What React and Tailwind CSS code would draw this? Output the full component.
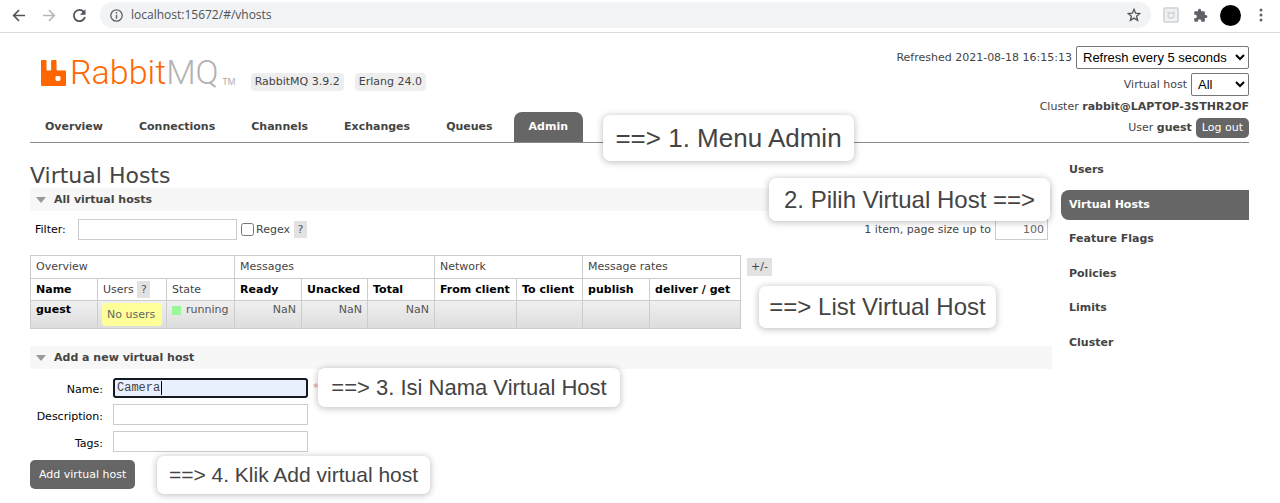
import React from "react";

const tabs = ["Overview", "Connections", "Channels", "Exchanges", "Queues", "Admin"];
const sideItems = ["Users", "Virtual Hosts", "Feature Flags", "Policies", "Limits", "Cluster"];

function BrowserBar() {
  return (
    <div className="flex h-[33px] items-center border-b border-[#dadce0] bg-white pr-[17px] pb-[2px] pl-2">
      <button type="button" aria-label="Back" className="flex w-[22px] justify-center">
        <svg width="14" height="13" viewBox="0 0 15 14" fill="none" stroke="#50545a" strokeWidth="1.7">
          <path d="M14 7H2M7.5 1.2L1.7 7l5.8 5.8" />
        </svg>
      </button>
      <button type="button" aria-label="Forward" className="ml-2 flex w-[22px] justify-center">
        <svg width="14" height="13" viewBox="0 0 15 14" fill="none" stroke="#b4b6b9" strokeWidth="1.6">
          <path d="M1 7h12M7.5 1.2L13.3 7l-5.8 5.8" />
        </svg>
      </button>
      <button type="button" aria-label="Reload" className="ml-2 flex w-[22px] justify-center">
        <svg width="15" height="15" viewBox="0 0 16 16" fill="none">
          <path d="M12.6 4.2A6 6 0 1 0 13.8 9.6" stroke="#50545a" strokeWidth="1.9" />
          <path d="M14.4 1.2v6H8.4z" fill="#50545a" />
        </svg>
      </button>
      <div className="ml-[10px] flex h-[26px] flex-1 items-center rounded-full bg-[#f1f3f4] pr-[10px] pl-[10px]">
        <svg width="13" height="13" viewBox="0 0 13 13" fill="none" stroke="#5f6368" className="shrink-0">
          <circle cx="6.5" cy="6.5" r="5.7" strokeWidth="1.3" />
          <path d="M6.5 5.7v4M6.5 3.1v1.4" strokeWidth="1.4" />
        </svg>
        <input
          aria-label="Address"
          readOnly
          value="localhost:15672/#/vhosts"
          className="ml-2 min-w-0 flex-1 bg-transparent font-['Open_Sans',sans-serif] text-[12px] text-[#4d5156] outline-none"
        />
        <button type="button" aria-label="Bookmark">
          <svg width="14" height="14" viewBox="0 0 14 14" fill="none" stroke="#50545a" strokeWidth="1.3">
            <path d="M7 1.3l1.6 3.9 4.2.3-3.2 2.7 1 4.1L7 10.1l-3.6 2.2 1-4.1L1.2 5.5l4.2-.3z" />
          </svg>
        </button>
      </div>
      <div className="flex items-center">
        <button type="button" aria-label="Password extension" className="ml-[12px]">
          <svg width="16" height="16" viewBox="0 0 17 17" fill="none">
            <rect x="1" y="1" width="15" height="15" rx="1" fill="#eff1f2" stroke="#ced2d5" strokeWidth="1.6" />
            <path d="M5.500 5.500v5l1.200 1h3.600l1.200-1v-5l-1.500 1h-3z" stroke="#ced2d5" strokeWidth="1.3" />
          </svg>
        </button>
        <button type="button" aria-label="Extensions" className="ml-[14px]">
          <svg width="15" height="15" viewBox="0 0 24 24" fill="#5f6368">
            <path d="M20.500 11H19V7c0-1.100-.9-2-2-2h-4V3.500a2.500 2.500 0 0 0-5 0V5H4c-1.100 0-2 .9-2 2v3.800h1.500a2.700 2.700 0 0 1 0 5.400H2V20c0 1.100.9 2 2 2h3.800v-1.500a2.700 2.700 0 0 1 5.400 0V22H17c1.100 0 2-.9 2-2v-4h1.500a2.500 2.500 0 0 0 0-5z" />
          </svg>
        </button>
        <button type="button" aria-label="Profile" className="ml-[12px] h-[21px] w-[21px] rounded-full bg-black" />
        <button type="button" aria-label="Browser menu" className="ml-[18px]">
          <svg width="4" height="14" viewBox="0 0 4 14" fill="#5f6368">
            <circle cx="2" cy="2" r="1.500" />
            <circle cx="2" cy="7" r="1.500" />
            <circle cx="2" cy="12" r="1.500" />
          </svg>
        </button>
      </div>
    </div>
  );
}

function Logo() {
  return (
    <a href="#/" aria-label="RabbitMQ" className="flex items-end">
      <svg width="25" height="26" viewBox="0 0 25 26" fill="#ff6600" className="mb-[5px]">
        <path
          fillRule="evenodd"
          d="M1 0h3.500q1 0 1 1v8.500q0 1 1 1h2.600q1 0 1-1V1q0-1 1-1h3.400q1 0 1 1v8.500q0 1 1 1H24q1 0 1 1V25q0 1-1 1H1q-1 0-1-1V1q0-1 1-1zM15.900 16q-1.400 0-1.400 1.400v2.200q0 1.400 1.400 1.400h2.200q1.400 0 1.400-1.400v-2.200q0-1.400-1.400-1.400z"
        />
      </svg>
      <span className="ml-1 font-['Roboto',sans-serif] text-[34px] leading-[38px] font-light text-[#f60]">
        Rabbit<span className="text-[#b3b3b3]">MQ</span>
      </span>
      <span className="mb-1 ml-1 font-['Open_Sans',sans-serif] text-[9px] leading-[10px] text-[#aaa]">TM</span>
    </a>
  );
}

function Header() {
  return (
    <header className="flex h-[110px] justify-between border-b border-[#888]">
      <div className="flex flex-col justify-between">
        <div className="flex items-end gap-[11px] pt-[20px] pl-[11px]">
          <Logo />
          <span className="ml-1 rounded-[4px] bg-[#eee] px-1 leading-[18px]">RabbitMQ 3.9.2</span>
          <span className="rounded-[4px] bg-[#eee] px-1 leading-[18px]">Erlang 24.0</span>
        </div>
        <nav className="flex gap-[6px] font-bold">
          {tabs.map((t) => (
            <a
              key={t}
              href={"#/" + t.toLowerCase()}
              className={
                t === "Admin"
                  ? "rounded-t-[8px] bg-[#666] px-[15px] leading-[30px] text-white"
                  : "px-[15px] leading-[30px]"
              }
            >
              {t}
            </a>
          ))}
        </nav>
      </div>
      <div className="flex flex-col items-end pt-[13px]">
        <div className="flex items-center gap-1">
          <label htmlFor="refresh">Refreshed 2021-08-18 16:15:13</label>
          <select
            id="refresh"
            className="h-[23px] w-[173px] rounded-[2px] border border-[#767676] bg-white pl-[2px] font-['Liberation_Sans',sans-serif] text-[13px] text-black"
          >
            <option>Refresh every 5 seconds</option>
          </select>
        </div>
        <div className="mt-1 flex items-center gap-1">
          <label htmlFor="vhost">Virtual host</label>
          <select
            id="vhost"
            className="h-[23px] w-[58px] rounded-[2px] border border-[#767676] bg-white pl-[2px] font-['Liberation_Sans',sans-serif] text-[13px] text-black"
          >
            <option>All</option>
          </select>
        </div>
        <div className="leading-[22px]">
          Cluster <b>rabbit@LAPTOP-3STHR2OF</b>
        </div>
        <div className="flex items-center gap-1">
          <span>
            User <b>guest</b>
          </span>
          <button type="button" className="h-[20px] rounded-[5px] bg-[#666] px-[6px] text-white">
            Log out
          </button>
        </div>
      </div>
    </header>
  );
}

function SectionTitle({ children }) {
  return (
    <h2 className="flex h-[23px] items-center bg-[#f7f7f7] pl-[6px] font-bold">
      <svg width="10" height="6" viewBox="0 0 10 6" fill="#999" className="mr-2">
        <path d="M0 0h10L5 6z" />
      </svg>
      {children}
    </h2>
  );
}

function HelpMark() {
  return (
    <button type="button" aria-label="Help" className="h-[17px] w-[13px] bg-[#e2e2e2] text-[#555]">
      ?
    </button>
  );
}

function HostsTable() {
  const cell = "border border-[#ccc] px-[5px] ";
  const sortable = cell + "text-left font-bold text-black";
  return (
    <table className="w-[710px] table-fixed border-collapse">
      <colgroup>
        <col className="w-[67px]" />
        <col className="w-[69px]" />
        <col className="w-[68px]" />
        <col className="w-[67px]" />
        <col className="w-[66px]" />
        <col className="w-[67px]" />
        <col className="w-[82px]" />
        <col className="w-[66px]" />
        <col className="w-[67px]" />
        <col className="w-[91px]" />
      </colgroup>
      <thead>
        <tr className="h-[23px] text-left">
          <th className={cell + "font-normal"} colSpan={3}>Overview</th>
          <th className={cell + "font-normal"} colSpan={3}>Messages</th>
          <th className={cell + "font-normal"} colSpan={2}>Network</th>
          <th className={cell + "font-normal"} colSpan={2}>Message rates</th>
        </tr>
        <tr className="h-[22px] text-left whitespace-nowrap">
          <th className={sortable}>Name</th>
          <th className={cell + "font-normal"}>
            Users <HelpMark />
          </th>
          <th className={cell + "font-normal"}>State</th>
          <th className={sortable}>Ready</th>
          <th className={sortable}>Unacked</th>
          <th className={sortable}>Total</th>
          <th className={sortable}>From client</th>
          <th className={sortable}>To client</th>
          <th className={sortable}>publish</th>
          <th className={sortable}>deliver / get</th>
        </tr>
      </thead>
      <tbody>
        <tr className="h-[28px] bg-linear-to-b from-[#f0f0f0] to-[#dcdcdc] align-top leading-[18px] whitespace-nowrap text-[#555]">
          <td className={cell}>
            <a href="#/vhosts/guest" className="font-bold text-black">guest</a>
          </td>
          <td className="border border-[#ccc] px-1 pt-[2px]">
            <div className="h-[23px] rounded-[4px] bg-[#ff9] px-[5px] leading-[23px] text-[#666]">No users</div>
          </td>
          <td className={cell}>
            <div className="flex items-center gap-[5px]">
              <span className="h-[9px] w-[9px] bg-[#98f898]" />
              running
            </div>
          </td>
          <td className={cell + "text-right"}>NaN</td>
          <td className={cell + "text-right"}>NaN</td>
          <td className={cell + "text-right"}>NaN</td>
          <td className={cell} />
          <td className={cell} />
          <td className={cell} />
          <td className={cell} />
        </tr>
      </tbody>
    </table>
  );
}

function FormRow({ id, label, children }) {
  return (
    <div className="flex items-center">
      <label htmlFor={id} className="w-[73px] pt-1 text-right text-black">{label}</label>
      <div className="ml-[10px] flex items-center">{children}</div>
    </div>
  );
}

function Callout({ className, children }) {
  return (
    <div
      className={
        "absolute flex items-center justify-center rounded-[7px] bg-white font-['Liberation_Sans',sans-serif] whitespace-nowrap text-[#444] shadow-[0_1px_6px_1px_rgba(0,0,0,0.22)] " +
        className
      }
    >
      {children}
    </div>
  );
}

export default function App() {
  return (
    <div className="relative bg-white pb-[13px] font-['DejaVu_Sans',sans-serif] text-[11px] leading-[16px] text-[#444]">
      <BrowserBar />
      <div className="pr-[31px] pl-[30px]">
        <Header />
        <div className="flex items-start gap-[9px]">
          <main className="min-w-0 flex-1">
            <h1 className="pt-5 text-[22px] leading-[25px]">Virtual Hosts</h1>
            <SectionTitle>All virtual hosts</SectionTitle>
            <div className="mt-2 flex items-center justify-between pr-1 pl-[5px]">
              <div className="flex items-center">
                <label htmlFor="filter" className="w-[43px] text-black">Filter:</label>
                <input id="filter" className="h-[21px] w-[159px] border border-[#ccc] px-1" />
                <input id="regex" type="checkbox" className="ml-1 h-[13px] w-[13px]" />
                <label htmlFor="regex" className="mr-1 ml-[2px]">Regex</label>
                <HelpMark />
              </div>
              <div className="flex items-center gap-1">
                <label htmlFor="pagesize">1 item, page size up to</label>
                <input
                  id="pagesize"
                  defaultValue="100"
                  className="h-[21px] w-[53px] border border-[#ccc] px-[3px] text-right text-[#666]"
                />
              </div>
            </div>
            <div className="mt-[15px] flex items-start gap-[6px]">
              <HostsTable />
              <button type="button" className="mt-[3px] h-[18px] bg-[#e2e2e2] px-1">+/-</button>
            </div>
            <div className="mt-[17px]">
              <SectionTitle>Add a new virtual host</SectionTitle>
            </div>
            <form className="mt-[9px] flex flex-col items-start" onSubmit={(e) => e.preventDefault()}>
              <div className="flex flex-col gap-[6px]">
                <FormRow id="name" label="Name:">
                  <span className="flex h-[20px] w-[195px] items-center rounded-[3px] border-2 border-[#151a20] bg-[#e8f0fe] pl-[2px]">
                    <input
                      id="name"
                      defaultValue="Camera"
                      className="w-[45px] border-r border-black bg-transparent font-['Liberation_Mono',monospace] text-[12px] leading-[14px] outline-none"
                    />
                  </span>
                  <span className="ml-[5px] h-[16px] text-[#f88]">*</span>
                </FormRow>
                <FormRow id="description" label="Description:">
                  <input id="description" className="h-[21px] w-[195px] border border-[#ccc] px-1" />
                </FormRow>
                <FormRow id="tags" label="Tags:">
                  <input id="tags" className="h-[21px] w-[195px] border border-[#ccc] px-1" />
                </FormRow>
              </div>
              <button type="submit" className="mt-2 h-[29px] rounded-[5px] bg-[#666] px-[9px] text-white">
                Add virtual host
              </button>
            </form>
          </main>
          <nav className="mt-3 flex h-[203px] w-[188px] flex-col justify-between font-bold">
            {sideItems.map((s) => (
              <a
                key={s}
                href="#/"
                className={
                  s === "Virtual Hosts"
                    ? "rounded-l-[8px] bg-[#666] px-2 leading-[30px] text-white"
                    : "px-2 leading-[30px]"
                }
              >
                {s}
              </a>
            ))}
          </nav>
        </div>
      </div>
      <Callout className="top-[115px] left-[603px] h-[46px] w-[251px] text-[26px]">==&gt; 1. Menu Admin</Callout>
      <Callout className="top-[178px] left-[769px] h-[43px] w-[281px] text-[24px]">2. Pilih Virtual Host ==&gt;</Callout>
      <Callout className="top-[286px] left-[759px] h-[42px] w-[237px] text-[24px]">==&gt; List Virtual Host</Callout>
      <Callout className="top-[368px] left-[318px] h-[39px] w-[302px] text-[22px]">==&gt; 3. Isi Nama Virtual Host</Callout>
      <Callout className="top-[456px] left-[157px] h-[38px] w-[273px] text-[21px]">==&gt; 4. Klik Add virtual host</Callout>
    </div>
  );
}
